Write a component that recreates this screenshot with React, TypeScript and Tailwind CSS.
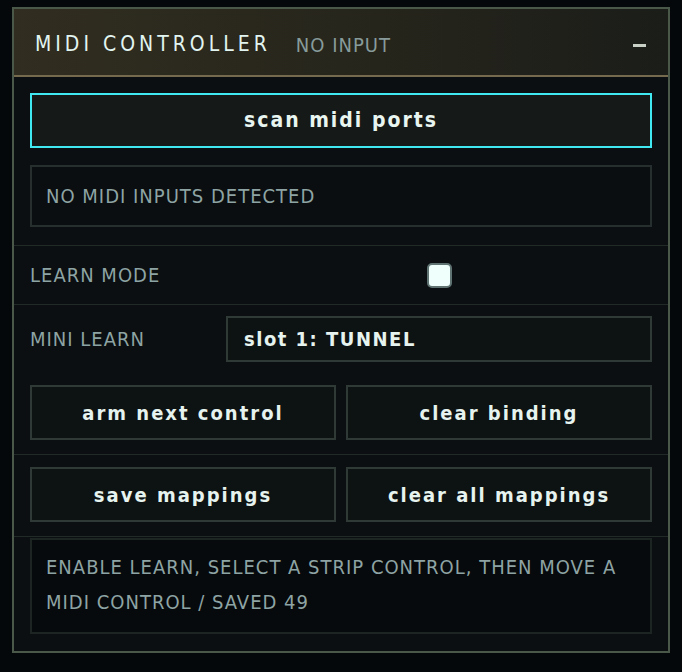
const font = "font-['DejaVu_Sans','Liberation_Sans',sans-serif] font-stretch-condensed"

function Button({ label }: { label: string }) {
  return (
    <button className="h-[55px] border-2 border-[#2f3936] bg-[#0d1213] text-[20px] font-bold tracking-[2px] text-[#e6f3ee]">
      {label}
    </button>
  )
}

export default function App() {
  return (
    <div className={`min-h-screen bg-[#05080a] px-3 pt-[7px] ${font}`}>
      <div className="border-2 border-[#4a584a] bg-[#0b0f11]">
        <header className="flex h-[68px] items-center border-b-2 border-[#756a4e] bg-gradient-to-r from-[#312d20] via-[#27261c] to-[#1b1d19] pl-[21px] pr-[22px] pt-[6px]">
          <span className="text-[21px] tracking-[4px] text-[#e2f5f1]">MIDI CONTROLLER</span>
          <span className="ml-[25px] text-[20px] tracking-[1px] text-[#879b9b]">NO INPUT</span>
          <span className="ml-auto h-[3px] w-[13px] bg-[#c8d0c6]" />
        </header>

        <section className="flex flex-col gap-[17px] border-b border-[#222a28] px-4 pb-[18px] pt-4">
          <button className="h-[55px] border-2 border-[#40e9f2] bg-[#151917] text-[21px] font-bold tracking-[2px] text-[#e8f5f0]">
            scan midi ports
          </button>
          <div className="flex h-[62px] items-center border-2 border-[#262f2d] bg-[#0a0e10] px-[14px] text-[20px] tracking-[1px] text-[#8ea4a4]">
            NO MIDI INPUTS DETECTED
          </div>
        </section>

        <section className="grid h-[59px] grid-cols-[196px_1fr] items-center border-b border-[#222a28] px-4">
          <span className="text-[20px] tracking-[1px] text-[#8ea4a4]">LEARN MODE</span>
          <div className="flex justify-center">
            <span className="block h-[25px] w-[25px] rounded-[5px] border-2 border-[#5f7373] bg-[#effffb]" />
          </div>
        </section>

        <section className="border-b border-[#222a28] px-4 pb-[14px] pt-[11px]">
          <div className="grid grid-cols-[196px_1fr] items-center">
            <span className="text-[20px] tracking-[1px] text-[#8ea4a4]">MINI LEARN</span>
            <div className="flex h-[46px] items-center border-2 border-[#2f3936] bg-[#0d1213] px-4 text-[20px] font-bold tracking-[1.5px] text-[#e6f3ee]">
              slot 1: TUNNEL
            </div>
          </div>
          <div className="mt-[23px] grid grid-cols-2 gap-[10px]">
            <Button label="arm next control" />
            <Button label="clear binding" />
          </div>
        </section>

        <section className="border-b border-[#222a28] px-4 pb-[14px] pt-3">
          <div className="grid grid-cols-2 gap-[10px]">
            <Button label="save mappings" />
            <Button label="clear all mappings" />
          </div>
        </section>

        <section className="px-4 pb-[17px] pt-px">
          <div className="h-[96px] border-2 border-[#1d2523] bg-[#070a0c] px-[14px] pt-[10px] text-[20px] leading-[35px] tracking-[1px] text-[#8ea4a4]">
            ENABLE LEARN, SELECT A STRIP CONTROL, THEN MOVE A MIDI CONTROL / SAVED 49
          </div>
        </section>
      </div>
    </div>
  )
}
